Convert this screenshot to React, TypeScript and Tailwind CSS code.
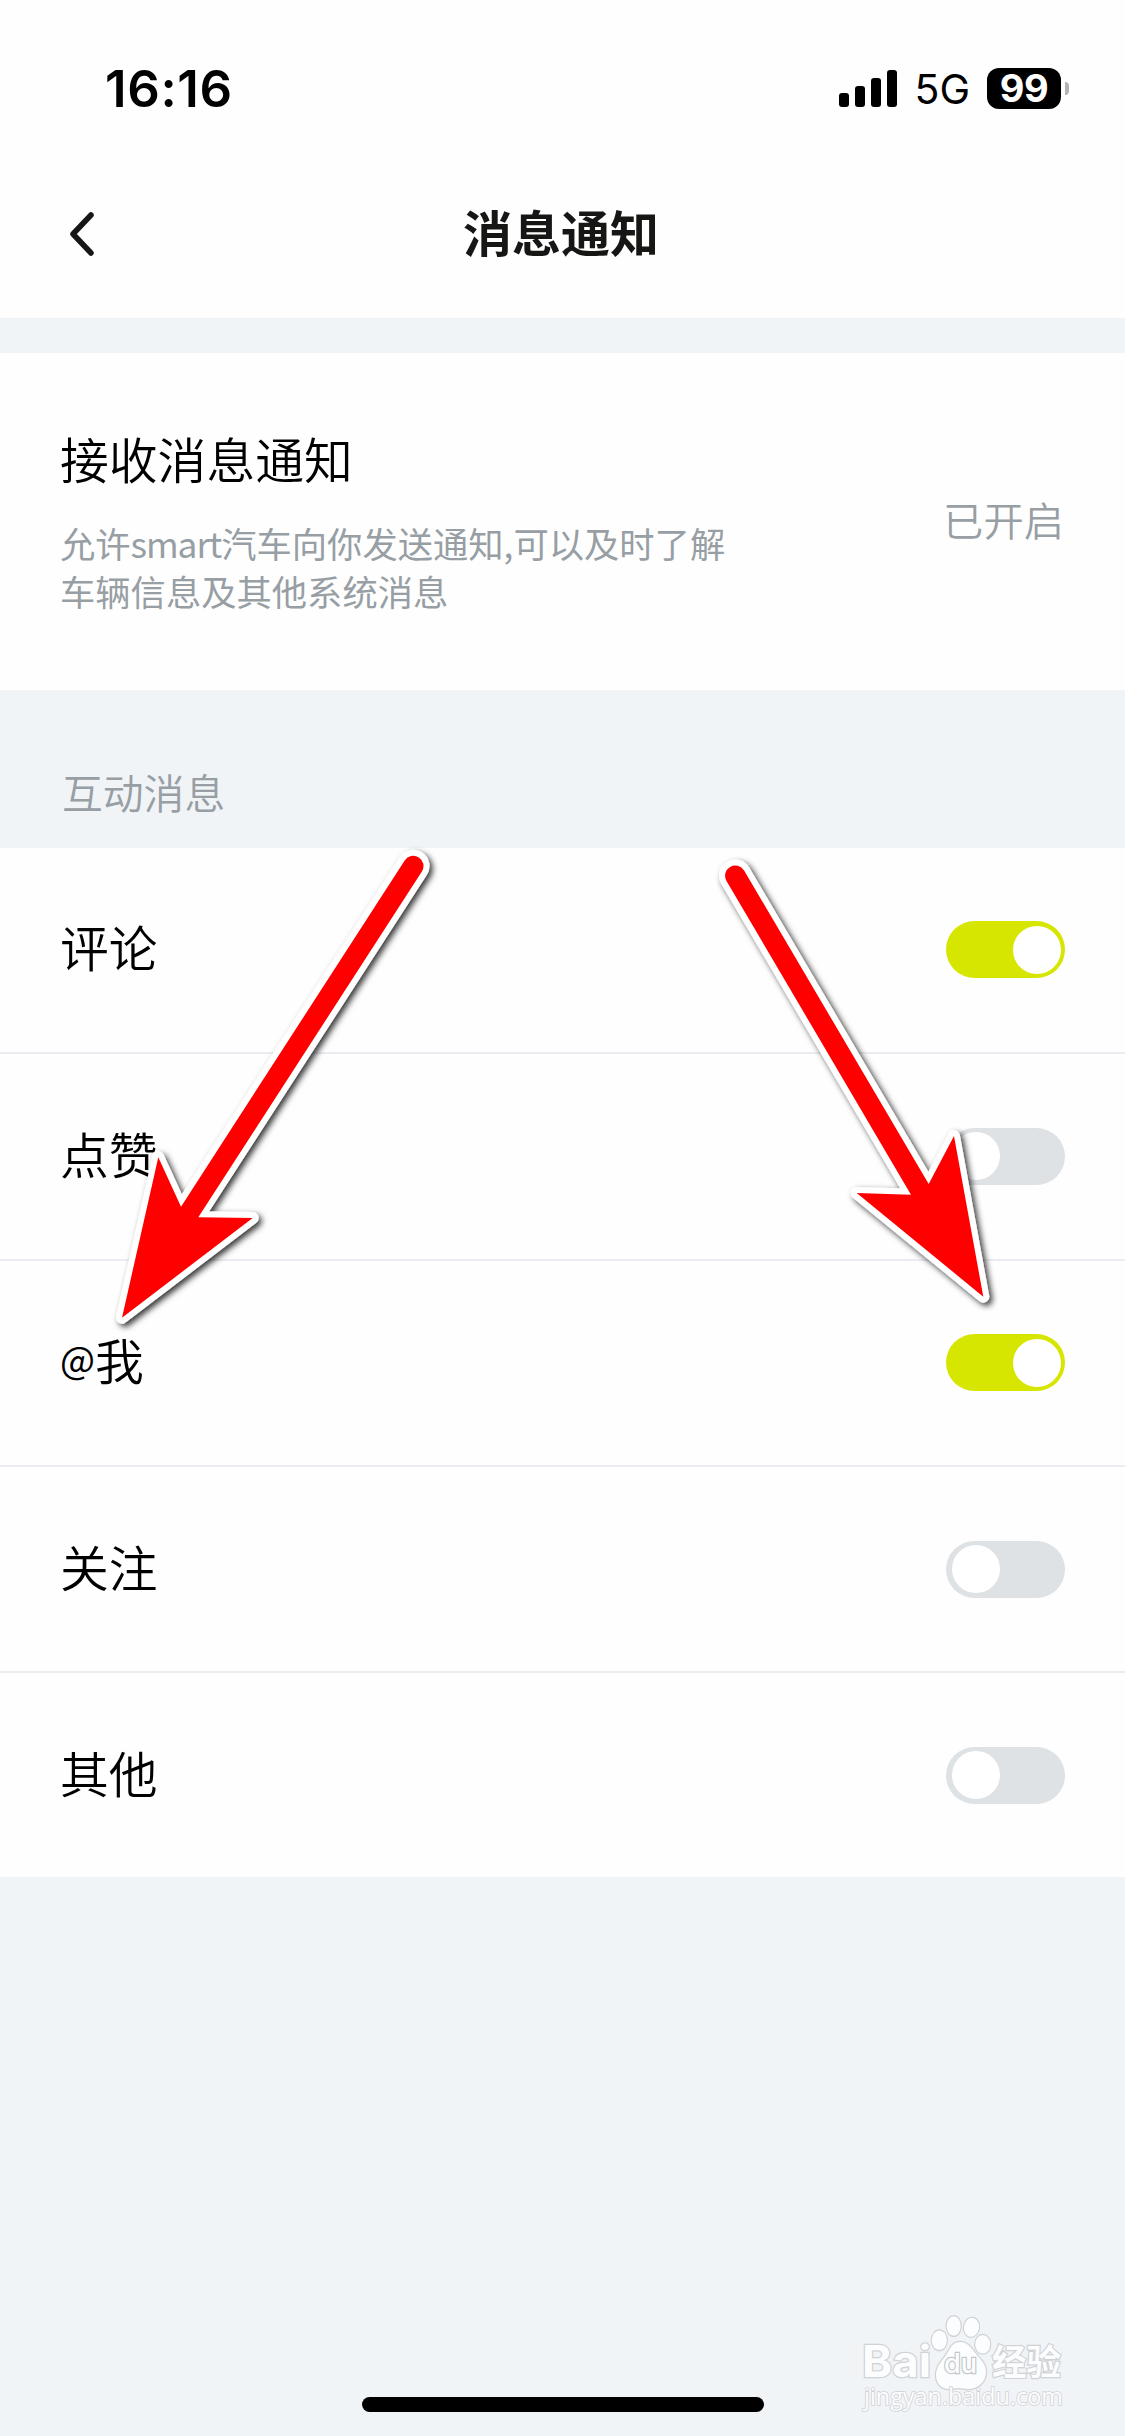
import { useState } from "react";

const ROWS = [
  { label: "评论", on: true },
  { label: "点赞", on: false },
  { label: "我", mention: true, on: true },
  { label: "关注", on: false },
  { label: "其他", on: false },
];

const StatusBar = () => {
  return (
    <div className="flex h-[147px] items-start justify-between pr-14 pl-[105px] font-['Inter',sans-serif] text-black">
      <span className="mt-[59px] text-[51px] leading-[60px] font-semibold tracking-[0.6px]">
        16:16
      </span>
      <div className="mt-[68px] flex h-[41px] items-center">
        <svg width="58" height="37" viewBox="0 0 58 37" className="mr-[17px]">
          <rect x="0" y="23" width="10" height="14" rx="3" />
          <rect x="16" y="16" width="10" height="21" rx="3" />
          <rect x="32" y="8" width="10" height="29" rx="3" />
          <rect x="48" y="0" width="10" height="37" rx="3" />
        </svg>
        <span className="mt-0.5 mr-[17px] text-[41px] leading-[41px] font-normal">
          5G
        </span>
        <span className="flex h-[41px] w-[74px] items-center justify-center rounded-[12px] bg-black text-[38px] leading-[41px] font-bold tracking-[-0.5px] text-white">
          99
        </span>
        <span className="ml-1 h-[13px] w-1 rounded-r-full bg-[#b3b3b3]" />
      </div>
    </div>
  );
};

const Header = () => {
  return (
    <header className="relative flex h-[171px] items-start justify-center">
      <svg
        width="26"
        height="44"
        viewBox="0 0 26 44"
        fill="none"
        stroke="#161614"
        strokeWidth="5.5"
        strokeLinecap="round"
        strokeLinejoin="round"
        className="absolute top-[65px] left-[69px]"
      >
        <path d="M22 3 L4 22 L22 41" />
      </svg>
      <h1 className="mt-[49px] mr-[3px] text-[49px] leading-[70px] font-bold text-[#161614]">
        消息通知
      </h1>
    </header>
  );
};

const Toggle = ({ on, onClick }: { on: boolean; onClick: () => void }) => {
  return (
    <button
      type="button"
      role="switch"
      aria-checked={on}
      onClick={onClick}
      className={`flex h-[57px] w-[119px] items-center rounded-full ${
        on ? "justify-end bg-[#d7e600] pr-1" : "justify-start bg-[#dee2e5] pl-1.5"
      }`}
    >
      <span className="size-12 rounded-full bg-white" />
    </button>
  );
};

const Arrows = () => {
  return (
    <svg
      width="1125"
      height="2436"
      viewBox="0 0 1125 2436"
      fill="#ff0000"
      className="pointer-events-none absolute inset-0"
    >
      <defs>
        <filter id="shadow" x="-20%" y="-20%" width="140%" height="140%">
          <feDropShadow dx="3" dy="3" stdDeviation="3" floodOpacity="0.8" />
        </filter>
      </defs>
      <g
        stroke="#fff"
        strokeWidth="12"
        strokeLinejoin="round"
        paintOrder="stroke"
        filter="url(#shadow)"
      >
        <path d="M404.7 860.5 A10.2 10.2 0 0 1 421.9 871.5 L198.3 1217.3 L252.7 1218 L122 1317.7 L158.3 1157.3 L181 1206.7 Z" />
        <path d="M726.5 880.9 A10.2 10.2 0 0 1 744.1 870.5 L928.7 1184 L954 1136 L983.3 1296.7 L856.7 1193 L911 1194.7 Z" />
      </g>
    </svg>
  );
};

const Watermark = () => {
  return (
    <svg
      width="240"
      height="120"
      viewBox="0 0 240 120"
      fill="#fcfdfe"
      stroke="#d0d2d5"
      strokeWidth="2.4"
      paintOrder="stroke"
      className="pointer-events-none absolute top-[2310px] left-[860px]"
    >
      <text x="2" y="67" fontSize="44" fontWeight="700" fontFamily="Inter, sans-serif" textLength="69" lengthAdjust="spacingAndGlyphs">
        Bai
      </text>
      <ellipse cx="79.3" cy="30.3" rx="7.5" ry="9.8" />
      <ellipse cx="93.7" cy="16" rx="7" ry="9.8" />
      <ellipse cx="111.5" cy="17.3" rx="7.5" ry="9.5" transform="rotate(8 111.5 17.3)" />
      <ellipse cx="122.7" cy="34.3" rx="7.5" ry="9.3" />
      <path d="M100 32 C108 32 111 38 116 44 C121 50 126 54 126 62 C126 72 118 79 108 79 C104 79 102 78 99 78 C95 78 93 79 89 79 C80 79 76 72 76 65 C76 56 82 51 86 45 C90 39 92 32 100 32 Z" />
      <text x="84" y="63" fontSize="27" fontWeight="500" fontFamily="Inter, sans-serif" stroke="#c4c7cb" textLength="33" lengthAdjust="spacingAndGlyphs">
        du
      </text>
      <text x="132" y="65" fontSize="35" fontWeight="700" fontFamily="'Noto Sans CJK SC', sans-serif" textLength="69" lengthAdjust="spacingAndGlyphs">
        经验
      </text>
      <text x="4" y="95" fontSize="23" fontWeight="400" strokeWidth="1.6" fontFamily="'Open Sans', sans-serif" textLength="199" lengthAdjust="spacingAndGlyphs">
        jingyan.baidu.com
      </text>
    </svg>
  );
};

export default function App() {
  const [rows, setRows] = useState(ROWS);

  const toggle = (index: number) =>
    setRows(rows.map((row, i) => (i === index ? { ...row, on: !row.on } : row)));

  return (
    <main className="relative flex h-[2436px] w-[1125px] flex-col overflow-hidden bg-[#f0f4f7] font-['Noto_Sans_CJK_SC',sans-serif] font-[350] text-black">
      <div className="bg-[#fefefe]">
        <StatusBar />
        <Header />
      </div>

      <section className="mt-[35px] flex h-[337px] items-start justify-between bg-[#fefefe] pr-[61px] pl-[60px]">
        <div className="pt-[70px]">
          <h2 className="text-[48.8px] leading-[70px]">接收消息通知</h2>
          <p className="mt-[26px] text-[35.3px] leading-12 font-normal text-[#979ea4]">
            允许<span className="tracking-[-1.1px]">smart</span>
            汽车向你发送通知,可以及时了解
            <br />
            车辆信息及其他系统消息
          </p>
        </div>
        <span className="mt-[136px] text-[40.3px] leading-[60px] text-[#979ea4]">
          已开启
        </span>
      </section>

      <h3 className="h-[158px] pt-[72px] pl-[62px] text-[40.8px] leading-[60px] text-[#979ea4]">
        互动消息
      </h3>

      <ul className="bg-[#fefefe]">
        {rows.map((row, i) => (
          <li
            key={row.label}
            className="flex h-[206.3px] items-center justify-between border-b-2 border-[#e9edf1] pr-[60px] pl-[60px] first:pb-px last:h-[204px] last:border-0"
          >
            <span className="-mt-[7px] text-[48.8px] leading-[70px]">
              {row.mention && (
                <span className="align-[6px] text-[37px] leading-none font-normal">
                  @
                </span>
              )}
              {row.label}
            </span>
            <Toggle on={row.on} onClick={() => toggle(i)} />
          </li>
        ))}
      </ul>

      <div className="mt-auto mb-6 h-[15px] w-[402px] self-center rounded-full bg-black" />

      <Arrows />
      <Watermark />
    </main>
  );
}
